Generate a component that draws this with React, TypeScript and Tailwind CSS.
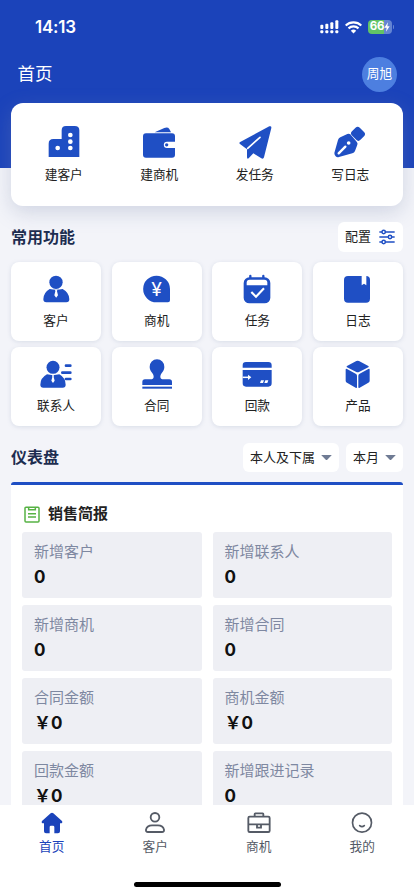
import React from 'react';

type Entry = { label: string; icon: React.ReactNode };

const quickActions: Entry[] = [
  {
    label: '建客户',
    icon: (
      <svg viewBox="0 0 96 96" className="size-8 overflow-visible" fill="currentColor">
        <path d="M2 93V53q0-14 14-14h25V13Q41 0 54 0h26q14 0 14 13v80z" />
        <g fill="#fff">
          <circle cx="29" cy="66" r="7" />
          <circle cx="67" cy="27" r="7" />
          <circle cx="67" cy="47" r="7" />
          <circle cx="67" cy="66" r="7" />
        </g>
      </svg>
    ),
  },
  {
    label: '建商机',
    icon: (
      <svg viewBox="0 0 96 96" className="size-8 overflow-visible" fill="currentColor">
        <path d="M35 19L64 6q10-4 15 3l5 10z" />
        <path d="M9 22h78q9 0 9 9v16H72a9 9 0 0 0 0 19h24v20q0 9-9 9H9q-9 0-9-9V31q0-9 9-9z" />
        <circle cx="71" cy="56.500" r="5" />
      </svg>
    ),
  },
  {
    label: '发任务',
    icon: (
      <svg viewBox="0 0 96 96" className="size-8 overflow-visible" fill="currentColor">
        <path d="M91 1q7-2 6 5L75 94q-2 6-8 3L43 82 29 97q-5 3-5-4V70L4 55q-6-5 1-8z" />
        <path d="M26 67L63 34" stroke="#fff" strokeWidth="5" strokeLinecap="round" />
      </svg>
    ),
  },
  {
    label: '写日志',
    icon: (
      <svg viewBox="0 0 96 96" className="size-8 overflow-visible" fill="currentColor">
        <rect x="54" y="7" width="36" height="33" rx="9" transform="rotate(45 72 23.500)" />
        <path d="M40 24q5-2 9 1l19 22q4 4 2 9l-7 19q-2 5-8 7L15 93q-6 2-10-2t-4-10l11-39q2-6 7-8z" />
        <path d="M14 82L34 62" stroke="#fff" strokeWidth="7" strokeLinecap="round" />
        <circle cx="44" cy="51" r="5.500" fill="#fff" />
      </svg>
    ),
  },
];

const features: Entry[] = [
  {
    label: '客户',
    icon: (
      <svg viewBox="0 0 90 90" className="size-[30px] overflow-visible" fill="currentColor">
        <circle cx="45" cy="25" r="20" />
        <path d="M26 45q19 5 39 0 20 11 20 31 0 9-9 9H16q-9 0-9-9 0-20 19-31z" />
        <path d="M42 47h7l-1 5 3 12-5.500 7-5.500-7 3-12z" fill="#fff" />
      </svg>
    ),
  },
  {
    label: '商机',
    icon: (
      <svg viewBox="0 0 90 90" className="size-[30px] overflow-visible" fill="currentColor">
        <path d="M43.500 5A40.500 40.500 0 0 1 84 45v34q0 6-6 6H43.500a40 40 0 0 1 0-80z" />
        <text x="43.500" y="67" fontSize="58" textAnchor="middle" fill="#fff">¥</text>
      </svg>
    ),
  },
  {
    label: '任务',
    icon: (
      <svg viewBox="0 0 90 90" className="size-[30px] overflow-visible" fill="currentColor">
        <rect x="5" y="10" width="80" height="78" rx="17" />
        <path d="M25 6v10M64 6v10" stroke="currentColor" strokeWidth="7" strokeLinecap="round" />
        <path d="M14 34v-8q0-9 9-9h44q9 0 9 9v8z" fill="#fff" />
        <path d="M28 54l14 14 24-25" stroke="#fff" strokeWidth="6.500" fill="none" />
      </svg>
    ),
  },
  {
    label: '日志',
    icon: (
      <svg viewBox="0 0 90 90" className="size-[30px] overflow-visible" fill="currentColor">
        <rect x="3" y="6" width="78" height="80" rx="12" />
        <path d="M56 5h14v29l-7-5-7 5z" fill="#fff" />
      </svg>
    ),
  },
  {
    label: '联系人',
    icon: (
      <svg viewBox="0 0 90 90" className="size-[30px] overflow-visible" fill="currentColor">
        <circle cx="36" cy="25" r="19.500" />
        <path d="M18 46q18 5 37 0 19 11 19 31 0 9-9 9H7q-9 0-9-9 0-20 20-31z" />
        <path d="M33 49h6l-1 5 3 11-5 7-5-7 3-11z" fill="#fff" />
        <path d="M75 20h13M64 41h24M75 60h13" stroke="currentColor" strokeWidth="8" strokeLinecap="round" />
      </svg>
    ),
  },
  {
    label: '合同',
    icon: (
      <svg viewBox="0 0 90 90" className="size-[30px] overflow-visible" fill="currentColor">
        <path d="M45 1a22 22 0 0 1 22 23c0 14-12 18-12 29q0 8 10 8h17q8 0 8 8v9H1v-9q0-8 8-8h16q10 0 10-8c0-11-12-15-12-29A22 22 0 0 1 45 1z" />
        <rect x="1" y="83" width="89" height="6" />
      </svg>
    ),
  },
  {
    label: '回款',
    icon: (
      <svg viewBox="0 0 90 90" className="size-[30px] overflow-visible" fill="currentColor">
        <path d="M2 26v-7Q2 9 12 9h67q10 0 10 10v7zM2 33h87v40q0 10-10 10H12Q2 83 2 73z" />
        <path d="M2 55h18" stroke="#fff" strokeWidth="4.500" />
        <path d="M18 47l10 8-10 8z" fill="#fff" />
        <path d="M57 64h9l-3 8h-9zM70 64h9l-3 8h-9z" fill="#fff" />
      </svg>
    ),
  },
  {
    label: '产品',
    icon: (
      <svg viewBox="0 0 90 90" className="size-[30px] overflow-visible" fill="currentColor">
        <path d="M40 6q4-2 8 0l28 15q3 2 0 4L48 39q-4 2-8 0L12 25q-3-2 0-4z" />
        <path d="M8 32q0-4 4-2l26 14q4 2 4 6v34q0 4-4 2L12 71q-4-2-4-6zM80 32q0-4-4-2L50 44q-4 2-4 6v34q0 4 4 2l26-15q4-2 4-6z" />
      </svg>
    ),
  },
];

const stats = [
  { label: '新增客户', value: '0' },
  { label: '新增联系人', value: '0' },
  { label: '新增商机', value: '0' },
  { label: '新增合同', value: '0' },
  { label: '合同金额', value: '￥0' },
  { label: '商机金额', value: '￥0' },
  { label: '回款金额', value: '￥0' },
  { label: '新增跟进记录', value: '0' },
];

const tabs: Entry[] = [
  {
    label: '首页',
    icon: (
      <svg viewBox="0 0 66 66" className="size-[22px]" fill="currentColor">
        <path d="M29 4q4-3 8 0l26 23q3 4-1 7h-5v24q0 6-6 6H40V45q0-4-4-4h-6q-4 0-4 4v19H15q-6 0-6-6V34H4q-4-3-1-7z" />
      </svg>
    ),
  },
  {
    label: '客户',
    icon: (
      <svg viewBox="0 0 66 66" className="size-[22px]" fill="none" stroke="currentColor" strokeWidth="5.500">
        <circle cx="33" cy="16" r="13" />
        <path d="M12 60q-7 0-6-7 3-13 18-13h18q15 0 18 13 1 7-6 7z" />
      </svg>
    ),
  },
  {
    label: '商机',
    icon: (
      <svg viewBox="0 0 72 66" className="h-[22px] w-6" fill="none" stroke="currentColor" strokeWidth="5.500">
        <rect x="4" y="14" width="64" height="46" rx="4" />
        <path d="M23 14V6q0-2 2-2h22q2 0 2 2v8M4 37h64M30 38v9h12v-9" />
      </svg>
    ),
  },
  {
    label: '我的',
    icon: (
      <svg viewBox="0 0 66 66" className="size-[22px]" fill="none" stroke="currentColor" strokeWidth="5">
        <circle cx="33" cy="32" r="28.500" />
        <path d="M26 41q7 6 14 0" strokeLinecap="round" />
      </svg>
    ),
  },
];

const StatusBar = () => (
  <div className="flex h-[54px] items-center justify-between pl-[35px] pr-[20px] text-white">
    <span className="text-[17px] font-semibold leading-none tracking-[-0.2px]">14:13</span>
    <div className="flex items-center gap-[6px]">
      <svg viewBox="0 0 57 42" className="h-[14px] w-[19px]" fill="currentColor">
        <rect x="1" y="14" width="9" height="13" rx="3" />
        <rect x="16" y="11" width="9" height="16" rx="3" />
        <rect x="31" y="7" width="9" height="20" rx="3" />
        <rect x="46" y="1" width="9" height="26" rx="3" />
        <rect x="1" y="31" width="9" height="9" rx="3" />
        <rect x="16" y="31" width="9" height="9" rx="3" />
        <rect x="31" y="31" width="9" height="9" rx="3" />
        <rect x="46" y="31" width="9" height="9" rx="3" />
      </svg>
      <svg viewBox="0 0 51 39" className="h-[13px] w-[17px]" fill="none" stroke="currentColor" strokeWidth="6.500">
        <path d="M2 13.500a34 34 0 0 1 47 0M10.500 22a22 22 0 0 1 30 0" />
        <path d="M17.500 29a12 12 0 0 1 16 0l-8 8.500z" fill="currentColor" stroke="none" />
      </svg>
      <div className="flex items-center gap-px">
        <div className="flex h-[14px] w-[24px] items-center justify-center rounded-[4px] bg-[linear-gradient(90deg,#62c366_66%,#6384d3_66%)]">
          <span className="text-[11.5px] font-bold leading-none tracking-[-0.2px]">66</span>
          <svg viewBox="0 0 18 30" className="h-[10px] w-[6px]" fill="currentColor">
            <path d="M12 1L1 17h7L6 29l11-16h-7z" />
          </svg>
        </div>
        <div className="h-1 w-px rounded-r bg-[#6384d3]" />
      </div>
    </div>
  </div>
);

const Select = ({ label }: { label: string }) => (
  <button className="flex h-[29px] items-center gap-[6px] rounded-md bg-white px-[7px] text-[13px] text-[#222]">
    {label}
    <svg viewBox="0 0 33 17" className="h-[5.5px] w-[11px]" fill="#6f7b94">
      <path d="M0 0h33L16.500 17z" />
    </svg>
  </button>
);

const App = () => {
  return (
    <div className="flex h-[896px] w-[414px] flex-col overflow-hidden bg-[#f3f4f9] font-[Inter,'Noto_Sans_CJK_SC',sans-serif] text-[#222]">
      <header className="h-[168px] flex-none bg-[#1b43ba]">
        <StatusBar />
        <div className="flex h-[49px] items-center justify-between pb-[9px] pl-[17.5px] pr-[17px] text-white">
          <h1 className="text-[17.5px] leading-none">首页</h1>
          <div className="flex size-[35px] flex-none items-center justify-center rounded-full bg-[#4d7fe0] text-[12.7px]">周旭</div>
        </div>
        {/* the card hangs over the lower edge of the header */}
        <div className="mx-[11px] grid h-[103px] grid-cols-4 rounded-[12px] bg-white px-[5px] pt-[23px] shadow-[0_6px_20px_rgba(125,140,175,0.3)]">
          {quickActions.map((action) => (
            <div key={action.label} className="flex flex-col items-center text-[#1f4fc4]">
              {action.icon}
              <span className="mt-[7px] text-[12.7px] leading-5 text-[#222]">{action.label}</span>
            </div>
          ))}
        </div>
      </header>

      <main className="min-h-0 flex-1 overflow-hidden px-[11px] pt-[54px]">
        <div className="flex h-[30px] items-center justify-between">
          <h2 className="text-base font-bold text-[#1d2d50]">常用功能</h2>
          <button className="flex h-[30px] items-center gap-2 rounded-md bg-white pl-[7px] pr-2 text-[13px]">
            配置
            <svg viewBox="0 0 48 48" className="size-4" fill="#fff" stroke="#1f4fc4" strokeWidth="4.500">
              <path d="M1 9h46M1 24h46M1 39h46" />
              <circle cx="14" cy="9" r="5" />
              <circle cx="33" cy="24" r="5" />
              <circle cx="14" cy="39" r="5" />
            </svg>
          </button>
        </div>

        <div className="mt-[10px] grid grid-cols-4 gap-x-[10.7px] gap-y-[6.5px]">
          {features.map((item) => (
            <div
              key={item.label}
              className="flex h-[78.5px] flex-col items-center rounded-lg bg-white pt-3 text-[#1f4fc4] shadow-[0_1px_4px_rgba(125,140,175,0.22)]"
            >
              {item.icon}
              <span className="mt-[7px] text-[12.7px] leading-5 text-[#222]">{item.label}</span>
            </div>
          ))}
        </div>

        <div className="mt-[17px] flex h-[30px] items-center justify-between">
          <h2 className="pb-0.5 text-base font-bold leading-none text-[#1d2d50]">仪表盘</h2>
          <div className="flex gap-[7px]">
            <Select label="本人及下属" />
            <Select label="本月" />
          </div>
        </div>

        <section className="mt-[9.5px] h-[400px] rounded-t-[3px] border-t-3 border-[#1f4fc4] bg-white px-[11px]">
          <div className="flex h-[46.5px] items-center gap-2 pl-[2px] pt-[12px]">
            <svg viewBox="0 0 48 51" className="h-[17px] w-4" fill="none" stroke="#57b244" strokeWidth="4.500">
              <rect x="3" y="4" width="42" height="44" rx="3" />
              <path d="M14 4v7h20V4M12 23h24M12 33h24" />
            </svg>
            <h3 className="text-[15px] font-bold">销售简报</h3>
          </div>
          <div className="grid grid-cols-2 gap-x-[11px] gap-y-[7.3px]">
            {stats.map((stat) => (
              <div key={stat.label} className="h-[66px] rounded-[3px] bg-[#eeeff4] px-3 pt-[9px]">
                <p className="text-[15px] leading-[22px] text-[#7e88a1]">{stat.label}</p>
                <p className="mt-[2px] text-[17px] font-bold leading-6 text-[#111]">{stat.value}</p>
              </div>
            ))}
          </div>
        </section>
      </main>

      <nav className="flex h-[91.5px] flex-none flex-col items-center justify-between bg-white pb-[9px] pt-[7px]">
        <div className="grid w-full grid-cols-4">
          {tabs.map((tab, index) => (
            <div key={tab.label} className={`flex flex-col items-center ${index === 0 ? 'text-[#1b43ba]' : 'text-[#555b66]'}`}>
              {tab.icon}
              <span className="mt-[3px] text-[12.7px] leading-5">{tab.label}</span>
            </div>
          ))}
        </div>
        <div className="h-[5px] w-[147px] rounded-full bg-black" />
      </nav>
    </div>
  );
};

export default App;
